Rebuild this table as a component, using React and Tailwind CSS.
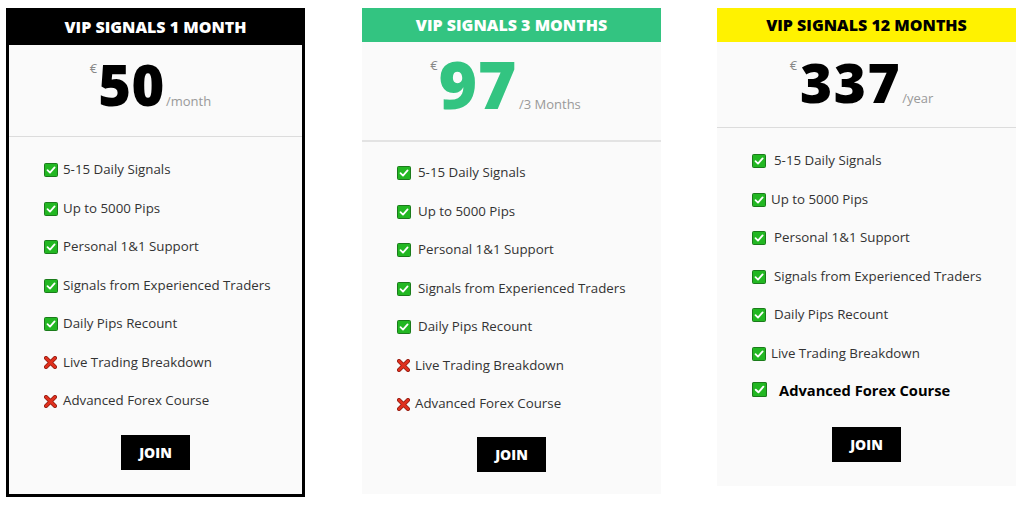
import React from "react";

const Check = ({ size = 14 }) => (
  <svg width={size} height={size} viewBox="0 0 14 14" className="shrink-0">
    <rect x="0.5" y="0.5" width="13" height="13" rx="1" fill="#22b722" stroke="#1b7a1b" />
    <path d="M3.5 7.2 L6 9.6 L10.6 4.4" fill="none" stroke="#ffffff" strokeWidth="1.8" strokeLinecap="round" strokeLinejoin="round" />
  </svg>
);

const Cross = () => (
  <svg width="13" height="13" viewBox="0 0 13 13" className="shrink-0">
    <path d="M2 2 L11 11 M11 2 L2 11" stroke="#8a1a10" strokeWidth="4" strokeLinecap="round" />
    <path d="M2 2 L11 11 M11 2 L2 11" stroke="#e0301e" strokeWidth="2.6" strokeLinecap="round" />
  </svg>
);

const Row = ({ ok, text, gap = "gap-[5px]" }) => (
  <li className={`flex items-center h-[38.5px] ${gap} text-[13.3px] text-[#333]`}>
    {ok ? <Check /> : <Cross />}
    <span>{text}</span>
  </li>
);

const font = { fontFamily: '"Open Sans", "Liberation Sans", sans-serif' };

export default function App() {
  return (
    <div className="w-[1024px] h-[507px] bg-white flex items-start pl-[6px] pt-[8px]" style={font}>
      {/* Card 1 */}
      <div className="w-[299px] border-[3px] border-black bg-[#fafafa] flex flex-col">
        <div className="h-[34px] bg-black text-white flex items-center justify-center text-[16px] font-extrabold pb-[3px]">
          VIP SIGNALS 1 MONTH
        </div>
        <div className="h-[92px] border-b border-[#dcdcdc] flex justify-center pt-[11px] pr-[10px]">
          <div className="flex items-baseline">
            <span className="self-start text-[13px] leading-none text-[#888] mt-[6px] mr-[1px]">€</span>
            <span className="text-[56px] leading-none font-extrabold text-black tracking-[0.5px]">50</span>
            <span className="text-[13px] text-[#999] ml-[1px]">/month</span>
          </div>
        </div>
        <ul className="pl-[35px] pt-[14px]">
          <Row ok text="5-15 Daily Signals" />
          <Row ok text="Up to 5000 Pips" />
          <Row ok text="Personal 1&1 Support" />
          <Row ok text="Signals from Experienced Traders" />
          <Row ok text="Daily Pips Recount" />
          <Row text="Live Trading Breakdown" gap="gap-[6px]" />
          <Row text="Advanced Forex Course" gap="gap-[6px]" />
        </ul>
        <div className="flex justify-center mt-[14px] pb-[24px]">
          <button className="w-[69px] h-[35px] bg-black text-white text-[14px] font-extrabold">JOIN</button>
        </div>
      </div>

      {/* Card 2 */}
      <div className="w-[299px] ml-[57px] bg-[#fafafa] flex flex-col">
        <div className="h-[34px] bg-[#33c481] text-white flex items-center justify-center text-[16px] font-extrabold">
          VIP SIGNALS 3 MONTHS
        </div>
        <div className="h-[100px] border-b-2 border-[#e3e3e3] flex justify-center pt-[8px] pr-[12px]">
          <div className="flex items-baseline">
            <span className="self-start text-[13px] leading-none text-[#888] mt-[9px] mr-[1px]">€</span>
            <span className="text-[66px] leading-none font-extrabold text-[#33c481] tracking-[0.5px]">97</span>
            <span className="text-[13px] text-[#999] ml-[2px]">/3 Months</span>
          </div>
        </div>
        <ul className="pl-[35px] pt-[12px]">
          <Row ok text="5-15 Daily Signals" gap="gap-[7px]" />
          <Row ok text="Up to 5000 Pips" gap="gap-[7px]" />
          <Row ok text="Personal 1&1 Support" gap="gap-[7px]" />
          <Row ok text="Signals from Experienced Traders" gap="gap-[7px]" />
          <Row ok text="Daily Pips Recount" gap="gap-[7px]" />
          <Row text="Live Trading Breakdown" gap="gap-[5px]" />
          <Row text="Advanced Forex Course" gap="gap-[5px]" />
        </ul>
        <div className="flex justify-center mt-[13px] pb-[22px]">
          <button className="w-[69px] h-[35px] bg-black text-white text-[14px] font-extrabold">JOIN</button>
        </div>
      </div>

      {/* Card 3 */}
      <div className="w-[299px] ml-[56px] bg-[#fafafa] flex flex-col">
        <div className="h-[34px] bg-[#fff200] text-black flex items-center justify-center text-[16px] font-extrabold">
          VIP SIGNALS 12 MONTHS
        </div>
        <div className="h-[86px] border-b border-[#dcdcdc] flex justify-center pt-[12px] pr-[10px]">
          <div className="flex items-baseline">
            <span className="self-start text-[13px] leading-none text-[#888] mt-[5px] mr-[3px]">€</span>
            <span className="text-[55px] leading-none font-extrabold text-black tracking-[1.5px]">337</span>
            <span className="text-[13px] text-[#999] ml-[1px]">/year</span>
          </div>
        </div>
        <ul className="pl-[35px] pt-[14px]">
          <Row ok text="5-15 Daily Signals" gap="gap-[8px]" />
          <Row ok text="Up to 5000 Pips" gap="gap-[5px]" />
          <Row ok text="Personal 1&1 Support" gap="gap-[8px]" />
          <Row ok text="Signals from Experienced Traders" gap="gap-[8px]" />
          <Row ok text="Daily Pips Recount" gap="gap-[8px]" />
          <Row ok text="Live Trading Breakdown" gap="gap-[5px]" />
          <li className="flex items-center h-[33.5px] gap-[12px] text-[14.7px] font-bold text-black">
            <Check size={15} />
            <span>Advanced Forex Course</span>
          </li>
        </ul>
        <div className="flex justify-center mt-[20px] pb-[24px]">
          <button className="w-[69px] h-[35px] bg-black text-white text-[14px] font-extrabold">JOIN</button>
        </div>
      </div>
    </div>
  );
}
